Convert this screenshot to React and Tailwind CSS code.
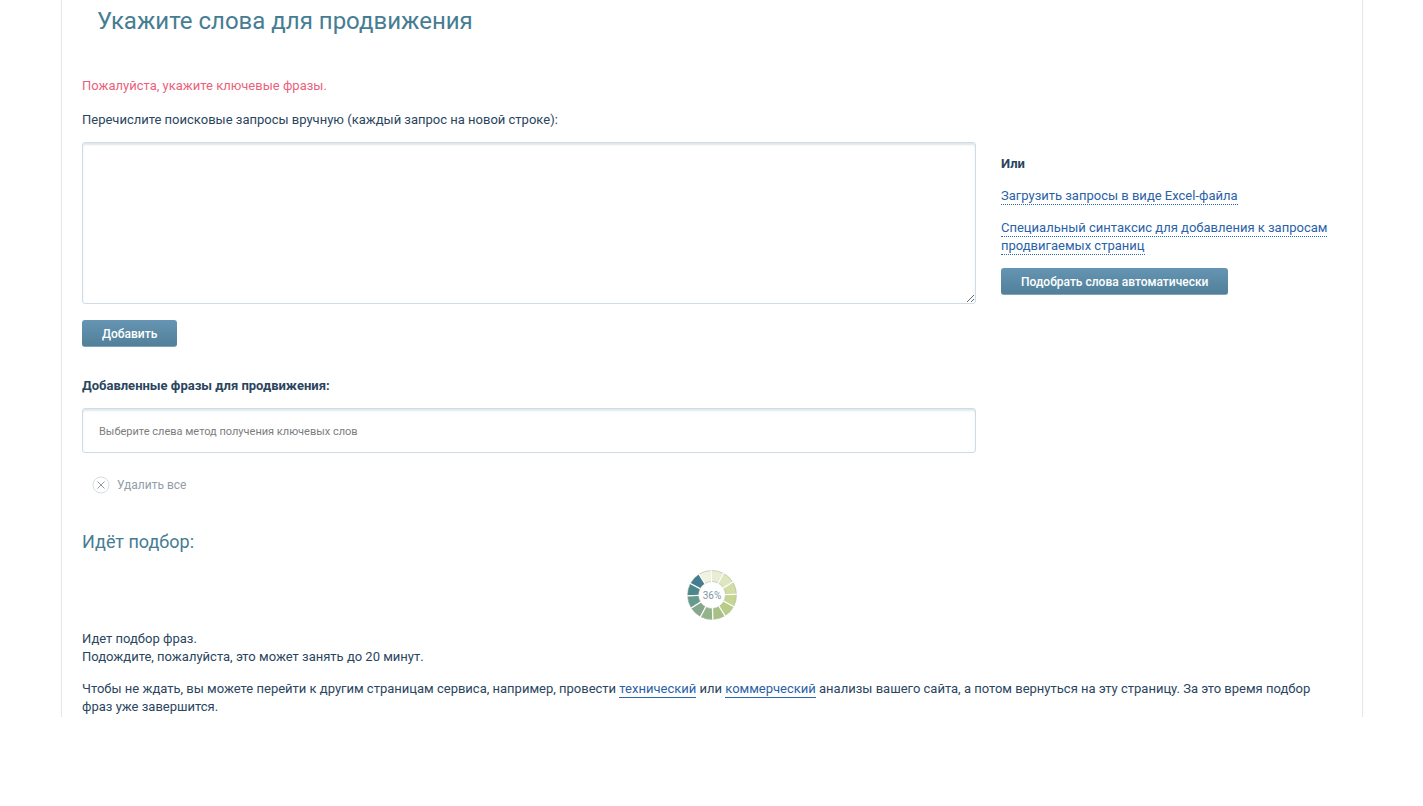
import React from 'react';

// clockwise, starting at twelve o'clock
const SEGMENTS = [
  '#e9edd5',
  '#dde6bd',
  '#d0dea3',
  '#c5d691',
  '#b9cd88',
  '#a7c086',
  '#93b48a',
  '#84a88e',
  '#649b8c',
  '#4b878b',
  '#457d90',
  '#f0f2e2',
];

const point = (radius, degrees) => {
  const angle = ((degrees - 90) * Math.PI) / 180;
  return `${(26 + radius * Math.cos(angle)).toFixed(2)} ${(26 + radius * Math.sin(angle)).toFixed(2)}`;
};

const segmentPath = (index) => {
  const start = index * 30 - 2;
  const end = start + 30;
  return `M${point(24.5, start)} A24.5 24.5 0 0 1 ${point(24.5, end)} L${point(13.5, end)} A13.5 13.5 0 0 0 ${point(13.5, start)} Z`;
};

const Spinner = ({ percent }) => (
  <svg
    className="mx-auto block size-[52px]"
    viewBox="0 0 52 52"
    role="img"
    aria-label={`${percent}%`}
  >
    {SEGMENTS.map((color, index) => (
      <path key={color} d={segmentPath(index)} fill={color} stroke="#a9b39b" strokeOpacity="0.7" strokeWidth="0.8" />
    ))}
    {SEGMENTS.map((color, index) => (
      <path
        key={color}
        d={`M${point(13, index * 30 - 2)} L${point(25.5, index * 30 - 2)}`}
        stroke="#fff"
        strokeWidth="1.3"
      />
    ))}
    <text x="26" y="30" textAnchor="middle" fontSize="10" fill="#8093a8">
      {percent}%
    </text>
  </svg>
);

const Button = ({ children }) => (
  <button
    type="button"
    className="block h-[27px] cursor-pointer rounded-[3px] border-b border-[#7fa3b8] bg-linear-to-b from-[#6595b3] to-[#52809a] px-5 pt-px text-xs font-medium text-white"
  >
    {children}
  </button>
);

const DottedLink = ({ children }) => (
  <a href="#" className="border-b border-dotted border-[#2a6bb0] pb-px text-[#2a62a8]">
    {children}
  </a>
);

const SolidLink = ({ children }) => (
  <a href="#" className="border-b border-[#2a6bb0] pb-px text-[#2a62a8]">
    {children}
  </a>
);

const KeywordForm = () => (
  <form>
    <p className="text-[#ec5f7c]">Пожалуйста, укажите ключевые фразы.</p>
    <label htmlFor="queries" className="mt-4 block">
      Перечислите поисковые запросы вручную (каждый запрос на новой строке):
    </label>

    <div className="mt-[13px] flex gap-[25px]">
      <div className="min-w-0 flex-1">
        <textarea
          id="queries"
          className="block h-[162px] w-full rounded-[3px] border border-[#cfdce4] bg-white p-2 shadow-[inset_0_2px_2px_#dfe8ed] outline-none"
        />
        <div className="mt-4 flex">
          <Button>Добавить</Button>
        </div>

        <label htmlFor="phrases" className="mt-[30px] block font-bold">
          Добавленные фразы для продвижения:
        </label>
        <input
          id="phrases"
          type="text"
          readOnly
          placeholder="Выберите слева метод получения ключевых слов"
          className="mt-[13px] block h-[45px] w-full rounded-[3px] border border-[#cfdce4] bg-white px-4 pt-[2px] text-[11px] shadow-[inset_0_2px_2px_#dfe8ed] outline-none placeholder:text-[#7d7d7d]"
        />
        <button
          type="button"
          className="mt-[23px] ml-[10px] flex cursor-pointer items-center gap-[7px] text-xs text-[#929daa]"
        >
          <svg className="size-[18px]" viewBox="0 0 18 18" fill="none" aria-hidden="true">
            <circle cx="9" cy="9" r="8" stroke="#d3dfe4" />
            <path d="M5.5 5.5l7 7M12.5 5.5l-7 7" stroke="#929daa" />
          </svg>
          Удалить все
        </button>
      </div>

      <aside className="flex w-[341px] flex-col items-start gap-[14px] pt-[13px]">
        <b>Или</b>
        <p>
          <DottedLink>Загрузить запросы в виде Excel-файла</DottedLink>
        </p>
        <p>
          <DottedLink>
            Специальный синтаксис для добавления к запросам продвигаемых страниц
          </DottedLink>
        </p>
        <div className="-mt-px">
          <Button>Подобрать слова автоматически</Button>
        </div>
      </aside>
    </div>
  </form>
);

const SelectionProgress = () => (
  <section className="mt-9">
    <h2 className="text-lg leading-6 text-[#467d92]">Идёт подбор:</h2>
    <div className="mt-[15px]">
      <Spinner percent={36} />
    </div>
    <p className="mt-[9px]">
      Идет подбор фраз.
      <br />
      Подождите, пожалуйста, это может занять до 20 минут.
    </p>
    <p className="mt-[14px]">
      Чтобы не ждать, вы можете перейти к другим страницам сервиса, например, провести{' '}
      <SolidLink>технический</SolidLink> или <SolidLink>коммерческий</SolidLink> анализы вашего
      сайта, а потом вернуться на эту страницу. За это время подбор фраз уже завершится.
    </p>
  </section>
);

const App = () => (
  <main className="mr-15 ml-[61px] border-x border-[#e4e6e8] px-5 pt-[7px] pb-px font-['Roboto',sans-serif] text-[13px] leading-[18px] text-[#2a4560]">
    <h1 className="mb-[42px] pl-[15px] text-2xl leading-7 text-[#467d92]">
      Укажите слова для продвижения
    </h1>
    <KeywordForm />
    <SelectionProgress />
  </main>
);

export default App;
